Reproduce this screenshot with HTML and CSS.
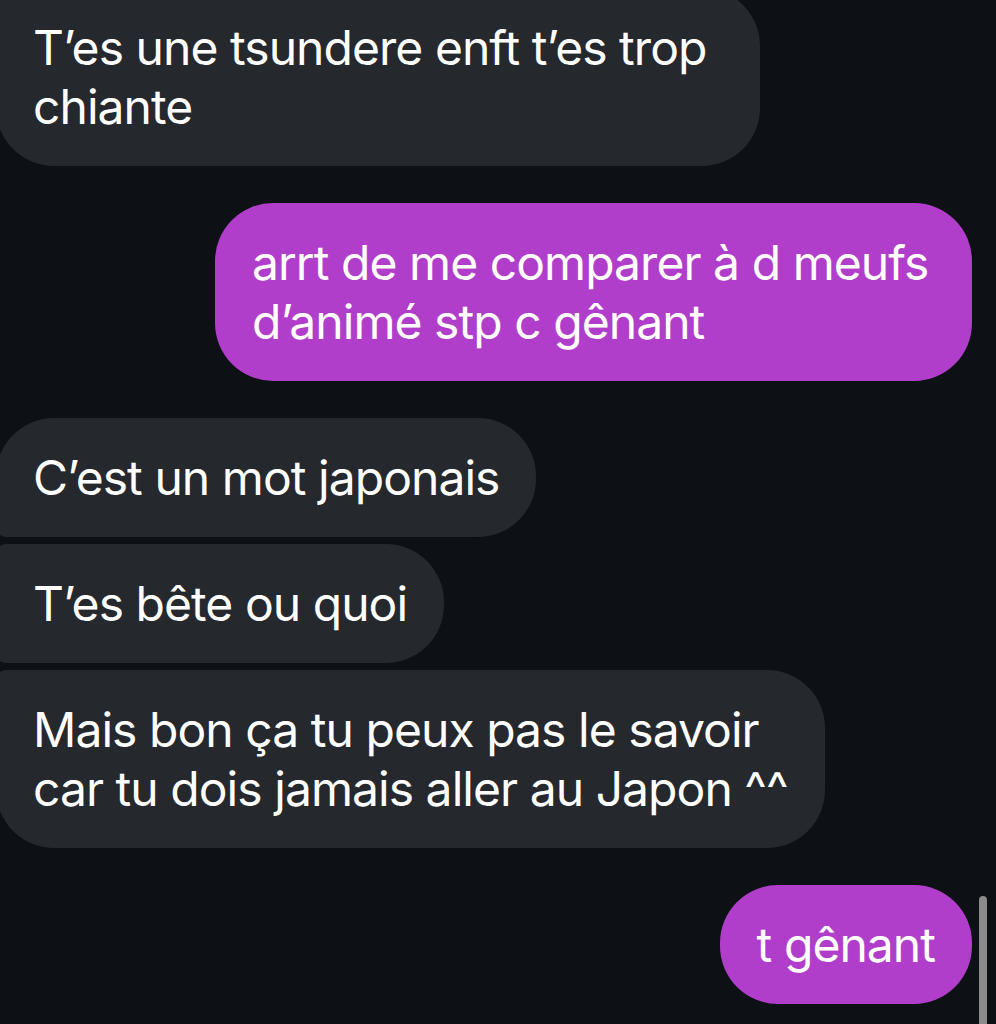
FILE: index.html
```html
<!DOCTYPE html>
<html lang="fr">
<head>
<meta charset="utf-8">
<title>Messages</title>
<link rel="stylesheet" href="styles.css">
</head>
<body>
<main class="chat">
  <div class="bubble in last wide-in">T’es une tsundere enft t’es trop<br>chiante</div>
  <div class="bubble out wide-out">arrt de me comparer à d meufs<br>d’animé stp c gênant</div>
  <div class="group">
    <div class="bubble in first">C’est un mot japonais</div>
    <div class="bubble in middle">T’es bête ou quoi</div>
    <div class="bubble in last">Mais bon ça tu peux pas le savoir<br>car tu dois jamais aller au Japon ^^</div>
  </div>
  <div class="bubble out">t gênant</div>
</main>
<div class="scrollbar"></div>
</body>
</html>
```

FILE: styles.css
```css
html, body {
  margin: 0;
  padding: 0;
  background: #0d1014;
  height: 100%;
  overflow: hidden;
}

.chat {
  display: flex;
  flex-direction: column;
  gap: 37px;
  margin-top: -12px;
  font-family: Inter, "Noto Sans", "Liberation Sans", sans-serif;
  font-size: 48px;
  font-weight: 380;
  line-height: 59px;
  color: #ffffff;
}

.group {
  display: flex;
  flex-direction: column;
  gap: 7px;
}

.bubble {
  box-sizing: border-box;
  width: fit-content;
  padding: 30px 37px;
  border-radius: 58px;
  white-space: nowrap;
  letter-spacing: -0.95px;
}

.in {
  background: #25282d;
  margin-left: -4px;
  align-self: flex-start;
}

.out {
  background: #b13ecb;
  align-self: flex-end;
  margin-right: 24px;
}

.in.first {
  border-bottom-left-radius: 10px;
}

.in.middle {
  border-top-left-radius: 10px;
  border-bottom-left-radius: 10px;
}

.in.last {
  border-top-left-radius: 10px;
}

.wide-in {
  width: 764px;
}

.wide-out {
  width: 757px;
}

.scrollbar {
  position: fixed;
  top: 896px;
  right: 9px;
  width: 8px;
  height: 140px;
  border-radius: 4px;
  background: #8b8b8b;
}
```
